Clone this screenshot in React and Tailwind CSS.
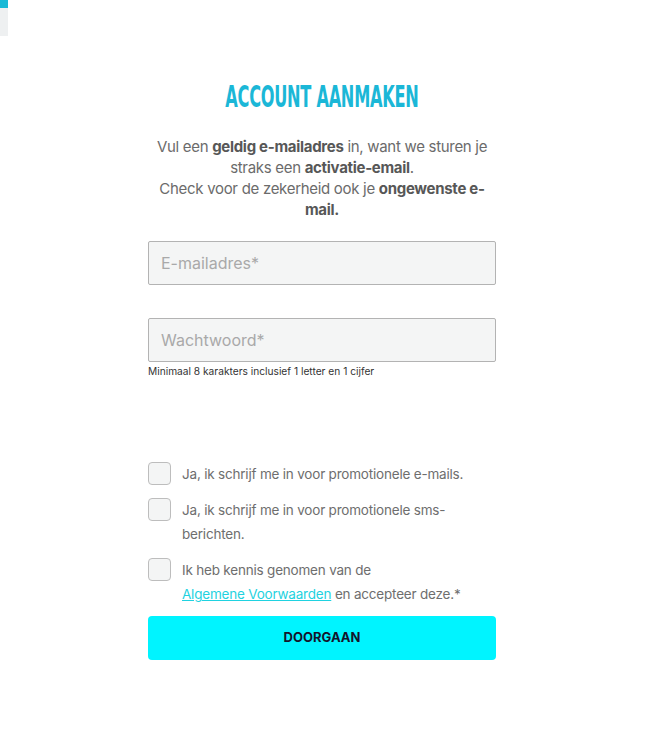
export default function App() {
  return (
    <div className="min-h-screen bg-white font-['Inter','Liberation_Sans',sans-serif]">
      <div className="w-2">
        <div className="h-2 bg-[#19b9d6]"></div>
        <div className="h-7 bg-[#eef0f1]"></div>
      </div>

      <div className="w-[348px] ml-[148px] flex flex-col">
        <h1 className="mt-[43px] text-center text-[#1bb7d7] font-['DejaVu_Sans_Condensed','Liberation_Sans_Narrow',sans-serif] font-bold text-[30px] leading-[36px] tracking-[-0.5px]">
          <span className="inline-block scale-x-[0.6] whitespace-nowrap">ACCOUNT AANMAKEN</span>
        </h1>

        <p className="mt-[21px] text-center text-[15px] tracking-[-0.3px] leading-[21px] text-[#6b6b6b]">
          Vul een <b className="text-[#575757]">geldig e-mailadres</b> in, want we sturen je straks een{' '}
          <b className="text-[#575757]">activatie-email</b>.
          <br />
          Check voor de zekerheid ook je <b className="text-[#575757]">ongewenste e-mail.</b>
        </p>

        <input
          type="email"
          placeholder="E-mailadres*"
          className="mt-[21px] h-[44px] w-full px-3 bg-[#f4f5f5] border border-[#b3b3b3] rounded-[2px] text-[16px] placeholder-[#a9a9a9] outline-none"
        />

        <input
          type="password"
          placeholder="Wachtwoord*"
          className="mt-[33px] h-[44px] w-full px-3 bg-[#f4f5f5] border border-[#b3b3b3] rounded-[2px] text-[16px] placeholder-[#a9a9a9] outline-none"
        />
        <div className="mt-[2px] text-[10.2px] leading-[14px] text-[#333]">
          Minimaal 8 karakters inclusief 1 letter en 1 cijfer
        </div>

        <div className="mt-[84px] flex flex-col gap-[12px] text-[13.5px] tracking-[-0.2px] leading-[24px] text-[#6e6e6e]">
          <label className="flex gap-[11px]">
            <span className="w-[23px] h-[23px] shrink-0 rounded-[4px] border border-[#bdbdbd] bg-[#f4f5f5]"></span>
            <span>Ja, ik schrijf me in voor promotionele e-mails.</span>
          </label>
          <label className="flex gap-[11px]">
            <span className="w-[23px] h-[23px] shrink-0 rounded-[4px] border border-[#bdbdbd] bg-[#f4f5f5]"></span>
            <span>Ja, ik schrijf me in voor promotionele sms-<br />berichten.</span>
          </label>
          <label className="flex gap-[11px]">
            <span className="w-[23px] h-[23px] shrink-0 rounded-[4px] border border-[#bdbdbd] bg-[#f4f5f5]"></span>
            <span>
              Ik heb kennis genomen van de
              <br />
              <a href="#" className="text-[#1fd2e0] underline">Algemene Voorwaarden</a> en accepteer deze.*
            </span>
          </label>
        </div>

        <button className="mt-[10px] h-[44px] w-full rounded-[4px] bg-[#00f4ff] text-[13px] font-bold text-[#14142b]">
          DOORGAAN
        </button>
      </div>
    </div>
  );
}
